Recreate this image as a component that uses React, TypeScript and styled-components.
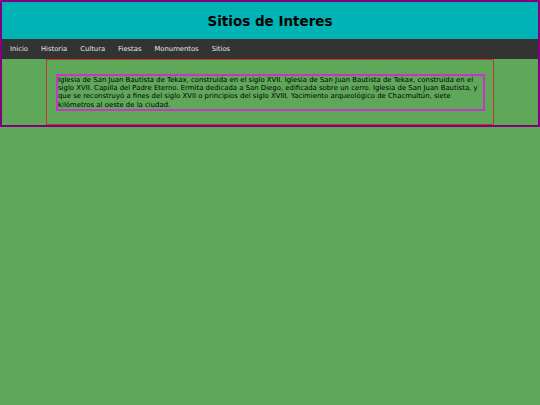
import React from 'react'
import styled, { createGlobalStyle } from 'styled-components'

const GlobalStyle = createGlobalStyle`
  html, body {
    margin: 0;
    padding: 0;
    background-color: #5fa85a;
    font-family: "DejaVu Sans", Verdana, sans-serif;
  }
`

const Page = styled.div`
  border: 2px solid #800080;
  display: flex;
  flex-direction: column;
`

const Header = styled.header`
  height: 37px;
  background-color: #00b4b6;
  display: flex;
  align-items: center;
  justify-content: center;
`

const Title = styled.h1`
  margin: 0;
  font-size: 13.5px;
  font-weight: bold;
  color: #000;
`

const Nav = styled.nav`
  height: 20px;
  background-color: #333333;
  display: flex;
  align-items: center;
  gap: 13px;
  padding-left: 8px;
`

const NavLink = styled.a`
  color: #e6e6e6;
  font-size: 6.8px;
  text-decoration: none;
`

const Main = styled.main`
  display: flex;
  justify-content: center;
`

const Article = styled.section`
  width: 448px;
  height: 66px;
  border: 1px solid #c0392b;
  padding: 14px 8px 0 9px;
  box-sizing: border-box;
`

const Text = styled.p`
  margin: 0;
  border: 2px solid #cc33cc;
  font-size: 6.9px;
  line-height: 8.2px;
  color: #000;
`

const links = ['Inicio', 'Historia', 'Cultura', 'Fiestas', 'Monumentos', 'Sitios']

export default function App() {
  return (
    <>
      <GlobalStyle />
      <Page>
        <Header>
          <Title>Sitios de Interes</Title>
        </Header>
        <Nav>
          {links.map((l) => (
            <NavLink key={l} href="#">{l}</NavLink>
          ))}
        </Nav>
        <Main>
          <Article>
            <Text>
              Iglesia de San Juan Bautista de Tekax, construida en el siglo XVII. Iglesia de San Juan Bautista de Tekax, construida en el siglo XVII. Capilla del Padre Eterno. Ermita dedicada a San Diego, edificada sobre un cerro. Iglesia de San Juan Bautista, y que se reconstruyó a fines del siglo XVII o principios del siglo XVIII. Yacimiento arqueológico de Chacmultún, siete kilómetros al oeste de la ciudad.
            </Text>
          </Article>
        </Main>
      </Page>
    </>
  )
}
